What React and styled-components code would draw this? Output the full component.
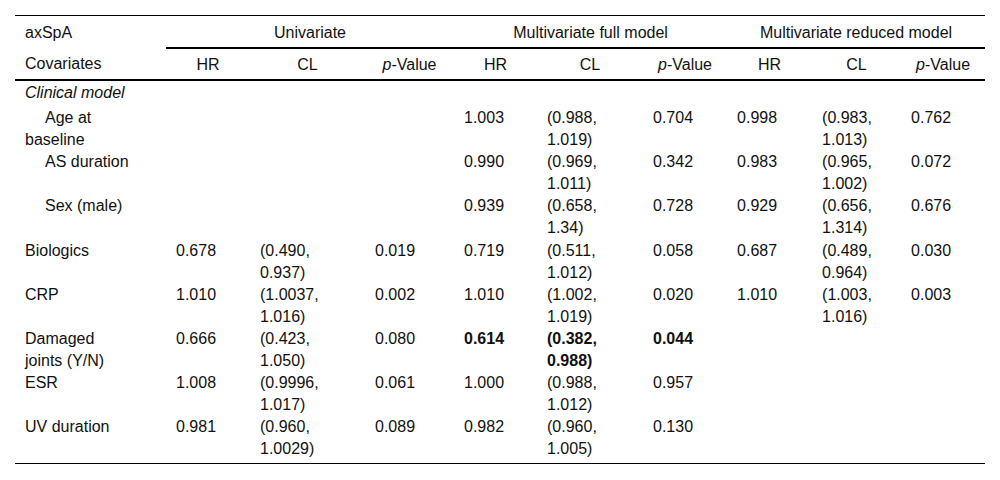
import React from "react";
import styled, { createGlobalStyle } from "styled-components";

const rows = [
  { label: "Clinical model", heading: true },
  { label: ["Age at", "baseline"], indent: true, full: ["1.003", ["0.988", "1.019"], "0.704"], reduced: ["0.998", ["0.983", "1.013"], "0.762"] },
  { label: "AS duration", indent: true, full: ["0.990", ["0.969", "1.011"], "0.342"], reduced: ["0.983", ["0.965", "1.002"], "0.072"] },
  { label: "Sex (male)", indent: true, groupEnd: true, full: ["0.939", ["0.658", "1.34"], "0.728"], reduced: ["0.929", ["0.656", "1.314"], "0.676"] },
  { label: "Biologics", uni: ["0.678", ["0.490", "0.937"], "0.019"], full: ["0.719", ["0.511", "1.012"], "0.058"], reduced: ["0.687", ["0.489", "0.964"], "0.030"] },
  { label: "CRP", uni: ["1.010", ["1.0037", "1.016"], "0.002"], full: ["1.010", ["1.002", "1.019"], "0.020"], reduced: ["1.010", ["1.003", "1.016"], "0.003"] },
  { label: ["Damaged", "joints (Y/N)"], uni: ["0.666", ["0.423", "1.050"], "0.080"], full: ["0.614", ["0.382", "0.988"], "0.044"], boldFull: true },
  { label: "ESR", uni: ["1.008", ["0.9996", "1.017"], "0.061"], full: ["1.000", ["0.988", "1.012"], "0.957"] },
  { label: "UV duration", uni: ["0.981", ["0.960", "1.0029"], "0.089"], full: ["0.982", ["0.960", "1.005"], "0.130"] },
];

const widths = [151, 84, 115, 89, 83, 106, 84, 85, 89, 84];

function Label({ value }) {
  if (Array.isArray(value)) {
    return (
      <>
        {value[0]}
        <br />
        {value[1]}
      </>
    );
  }
  return value;
}

function Stats({ values, bold }) {
  if (!values) {
    return (
      <>
        <Cell />
        <Cell />
        <Cell />
      </>
    );
  }
  const [hr, [lo, hi], p] = values;
  return (
    <>
      <Cell $bold={bold}>{hr}</Cell>
      <Cell $bold={bold}>
        ({lo},
        <br />
        {hi})
      </Cell>
      <Cell $bold={bold}>{p}</Cell>
    </>
  );
}

export default function App() {
  return (
    <Page>
      <GlobalStyle />
      <Table>
        <colgroup>
          {widths.map((w, i) => (
            <col key={i} style={{ width: w }} />
          ))}
        </colgroup>
        <thead>
          <GroupRow>
            <HeadCell $left>axSpA</HeadCell>
            <GroupCell colSpan={3}>Univariate</GroupCell>
            <GroupCell colSpan={3}>Multivariate full model</GroupCell>
            <GroupCell colSpan={3}>Multivariate reduced model</GroupCell>
          </GroupRow>
          <ColumnRow>
            <HeadCell $left>Covariates</HeadCell>
            {[0, 1, 2].map((g) => (
              <React.Fragment key={g}>
                <HeadCell>HR</HeadCell>
                <HeadCell>CL</HeadCell>
                <HeadCell>
                  <em>p</em>-Value
                </HeadCell>
              </React.Fragment>
            ))}
          </ColumnRow>
        </thead>
        <tbody>
          {rows.map((r, i) =>
            r.heading ? (
              <SectionRow key={i}>
                <Cell colSpan={10}>
                  <em>{r.label}</em>
                </Cell>
              </SectionRow>
            ) : (
              <BodyRow key={i} $groupEnd={r.groupEnd}>
                <LabelCell $indent={r.indent}>
                  <Label value={r.label} />
                </LabelCell>
                <Stats values={r.uni} />
                <Stats values={r.full} bold={r.boldFull} />
                <Stats values={r.reduced} />
              </BodyRow>
            )
          )}
        </tbody>
      </Table>
    </Page>
  );
}

const GlobalStyle = createGlobalStyle`
  html, body {
    margin: 0;
    background: #fff;
  }
  body {
    font-family: "Liberation Sans", Arial, sans-serif;
    color: #111;
  }
`;

const Page = styled.div`
  padding: 15px;
`;

const Table = styled.table`
  width: 970px;
  table-layout: fixed;
  border-collapse: collapse;
  border-top: 1px solid #000;
  border-bottom: 1px solid #000;
  font-size: 16px;
  line-height: 22px;
`;

const GroupRow = styled.tr`
  th {
    padding: 6px 10px 3px;
  }
`;

const ColumnRow = styled.tr`
  th {
    padding: 5px 10px 3px;
    border-bottom: 2px solid #000;
  }
`;

const HeadCell = styled.th`
  font-weight: normal;
  text-align: ${(p) => (p.$left ? "left" : "center")};
  vertical-align: top;
  white-space: nowrap;

  em {
    font-style: italic;
  }
`;

const GroupCell = styled(HeadCell)`
  border-bottom: 2px solid #000;
`;

const SectionRow = styled.tr`
  td {
    padding-top: 1px;
    padding-bottom: 3px;
  }
`;

const BodyRow = styled.tr`
  td {
    padding-bottom: ${(p) => (p.$groupEnd ? "1px" : "0")};
  }
  &:last-child td {
    padding-bottom: 3px;
  }
`;

const Cell = styled.td`
  padding: 0 10px;
  text-align: left;
  vertical-align: top;
  white-space: nowrap;
  font-weight: ${(p) => (p.$bold ? "bold" : "normal")};
`;

const LabelCell = styled(Cell)`
  text-indent: ${(p) => (p.$indent ? "20px" : "0")};
`;
